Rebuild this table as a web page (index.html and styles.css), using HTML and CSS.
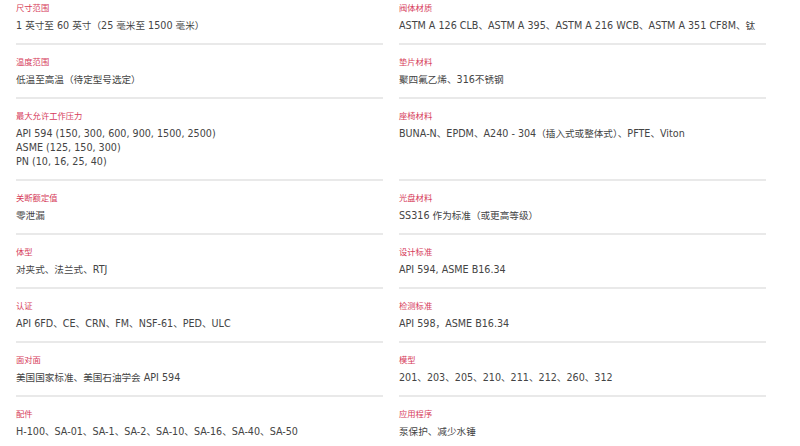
FILE: index.html
```html
<!DOCTYPE html>
<html lang="zh-CN">
<head>
<meta charset="utf-8">
<title>规格</title>
<link rel="stylesheet" href="styles.css">
</head>
<body>
<div class="specs">
  <div class="spec"><div class="label">尺寸范围</div><div class="value">1 英寸至 60 英寸（25 毫米至 1500 毫米）</div></div>
  <div class="spec"><div class="label">阀体材质</div><div class="value">ASTM A 126 CLB、ASTM A 395、ASTM A 216 WCB、ASTM A 351 CF8M、钛</div></div>

  <div class="spec"><div class="label">温度范围</div><div class="value">低温至高温（待定型号选定）</div></div>
  <div class="spec"><div class="label">垫片材料</div><div class="value">聚四氟乙烯、316不锈钢</div></div>

  <div class="spec"><div class="label">最大允许工作压力</div><div class="value">API 594 (150, 300, 600, 900, 1500, 2500)<br>ASME (125, 150, 300)<br>PN (10, 16, 25, 40)</div></div>
  <div class="spec"><div class="label">座椅材料</div><div class="value">BUNA-N、EPDM、A240 - 304（插入式或整体式）、PFTE、Viton</div></div>

  <div class="spec"><div class="label">关断额定值</div><div class="value">零泄漏</div></div>
  <div class="spec"><div class="label">光盘材料</div><div class="value">SS316 作为标准（或更高等级）</div></div>

  <div class="spec"><div class="label">体型</div><div class="value">对夹式、法兰式、RTJ</div></div>
  <div class="spec"><div class="label">设计标准</div><div class="value">API 594, ASME B16.34</div></div>

  <div class="spec"><div class="label">认证</div><div class="value">API 6FD、CE、CRN、FM、NSF-61、PED、ULC</div></div>
  <div class="spec"><div class="label">检测标准</div><div class="value">API 598，ASME B16.34</div></div>

  <div class="spec"><div class="label">面对面</div><div class="value">美国国家标准、美国石油学会 API 594</div></div>
  <div class="spec"><div class="label">模型</div><div class="value">201、203、205、210、211、212、260、312</div></div>

  <div class="spec last"><div class="label">配件</div><div class="value">H-100、SA-01、SA-1、SA-2、SA-10、SA-16、SA-40、SA-50</div></div>
  <div class="spec last"><div class="label">应用程序</div><div class="value">泵保护、减少水锤</div></div>
</div>
</body>
</html>
```

FILE: styles.css
```css
html, body {
  margin: 0;
  padding: 0;
  background: #ffffff;
}

body {
  font-family: "DejaVu Sans", "Noto Sans CJK SC", sans-serif;
  overflow: hidden;
}

.specs {
  display: grid;
  grid-template-columns: 1fr 1fr;
  column-gap: 16px;
  padding: 0 34px 0 16px;
  margin-top: -9px;
}

.spec {
  padding: 10px 0 10px;
  border-bottom: 2px solid #e9e9e9;
}

.spec.last {
  border-bottom: none;
}

.label {
  font-size: 8.3px;
  line-height: 12px;
  color: #d63b5a;
  font-family: "Noto Sans CJK SC", sans-serif;
}

.value {
  margin-top: 6px;
  font-size: 9.6px;
  line-height: 14px;
  color: #444444;
  white-space: nowrap;
}
```
